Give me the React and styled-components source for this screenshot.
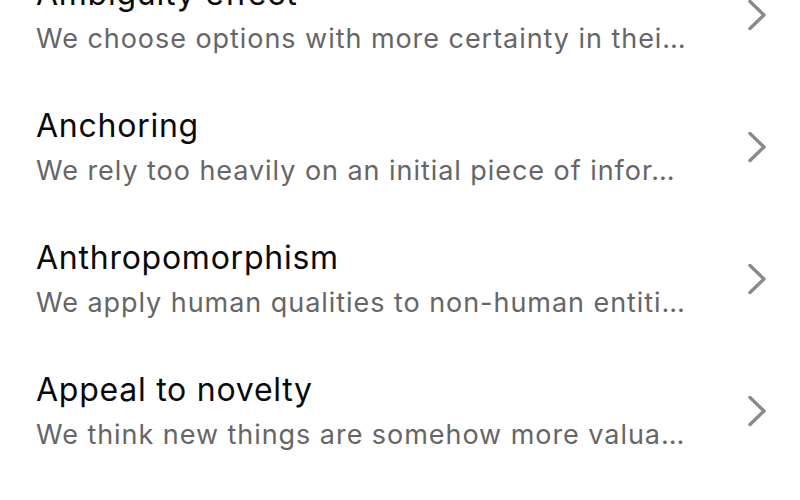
import React from "react";
import styled, { createGlobalStyle } from "styled-components";

const GlobalStyle = createGlobalStyle`
  html, body {
    margin: 0;
    padding: 0;
    background: #ffffff;
    overflow: hidden;
  }
  body {
    font-family: "Inter", "Noto Sans", sans-serif;
    -webkit-font-smoothing: antialiased;
  }
`;

const Screen = styled.div`
  width: 800px;
  height: 500px;
  overflow: hidden;
  background: #ffffff;
`;

const List = styled.ul`
  list-style: none;
  margin: -51px 0 0;
  padding: 0;
`;

const Row = styled.li`
  display: flex;
  align-items: center;
  height: 132px;
  box-sizing: border-box;
  padding: 0 33px 0 36px;
`;

const Text = styled.div`
  flex: 1;
  min-width: 0;
  display: flex;
  flex-direction: column;
  gap: 8px;
`;

const Title = styled.div`
  font-size: 32px;
  line-height: 40px;
  color: #0a0a0a;
  font-weight: 400;
  letter-spacing: 0.75px;
`;

const Subtitle = styled.div`
  font-size: 27px;
  line-height: 34px;
  color: #666666;
  white-space: nowrap;
  overflow: hidden;
  text-overflow: ellipsis;
  letter-spacing: 0.95px;
`;

const Chevron = styled.svg`
  flex: none;
  width: 20px;
  height: 32px;
  margin-left: 12px;
`;

const items = [
  {
    title: "Ambiguity effect",
    subtitle: "We choose options with more certainty in thei…",
  },
  {
    title: "Anchoring",
    subtitle: "We rely too heavily on an initial piece of infor…",
  },
  {
    title: "Anthropomorphism",
    subtitle: "We apply human qualities to non-human entiti…",
  },
  {
    title: "Appeal to novelty",
    subtitle: "We think new things are somehow more valua…",
  },
];

const App = () => {
  return (
    <>
      <GlobalStyle />
      <Screen>
        <List>
          {items.map((item) => (
            <Row key={item.title}>
              <Text>
                <Title>{item.title}</Title>
                <Subtitle>{item.subtitle}</Subtitle>
              </Text>
              <Chevron viewBox="0 0 20 32">
                <path
                  d="M3 2.5 L17 16 L3 29.5"
                  fill="none"
                  stroke="#8a8a8e"
                  strokeWidth="3.4"
                  strokeLinecap="round"
                  strokeLinejoin="round"
                />
              </Chevron>
            </Row>
          ))}
        </List>
      </Screen>
    </>
  );
};

export default App;
